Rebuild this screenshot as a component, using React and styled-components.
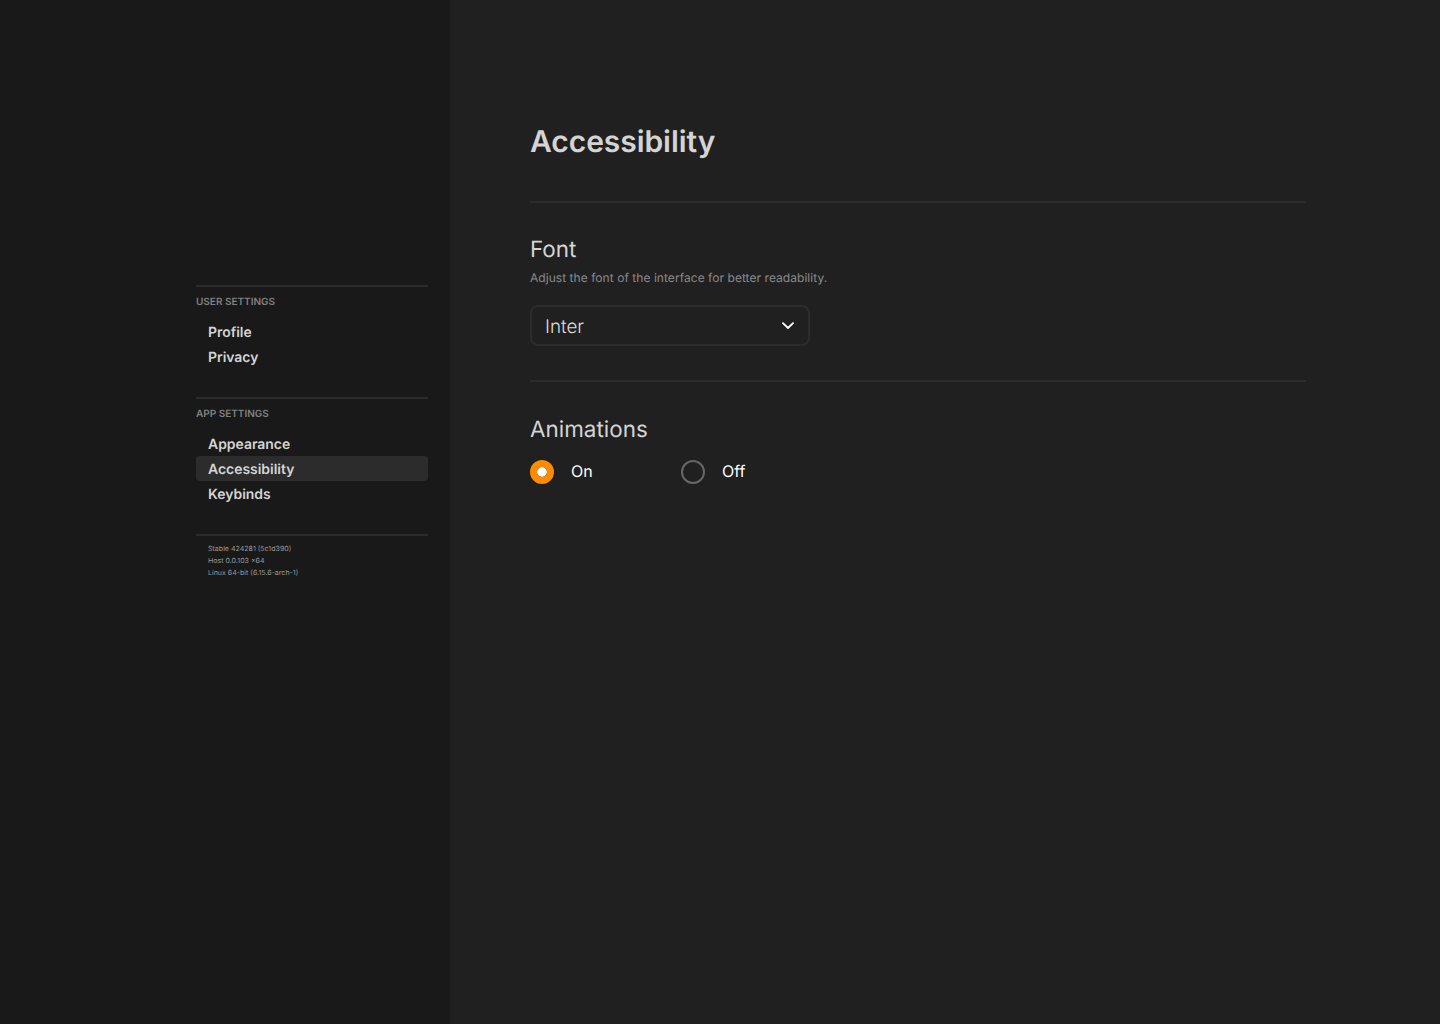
import React, { useState } from "react";
import styled, { createGlobalStyle } from "styled-components";

const GlobalStyle = createGlobalStyle`
  * { box-sizing: border-box; }
  body {
    margin: 0;
    background: #202020;
    font-family: Inter, sans-serif;
    color: #d4d4d4;
    text-rendering: geometricPrecision;
    -webkit-font-smoothing: antialiased;
  }
`;

const Page = styled.div`
  display: flex;
  height: 1024px;
  overflow: hidden;
`;

const Sidebar = styled.aside`
  flex: 0 0 450px;
  padding: 285px 22px 0 196px;
  background: #191919;
`;

const Group = styled.section`
  height: ${(p) => p.$height}px;
  border-top: 2px solid #2c2c2c;
`;

const GroupTitle = styled.h2`
  margin: 0;
  padding-top: 9px;
  height: 32px;
  font-size: 10px;
  line-height: 12px;
  font-weight: 600;
  color: #808080;
  white-space: nowrap;
`;

const NavItem = styled.a`
  display: block;
  height: 25px;
  padding-left: 12px;
  border-radius: 4px;
  background: ${(p) => (p.$active ? "#2c2c2c" : "transparent")};
  font-size: 13.95px;
  line-height: 27px;
  font-weight: 600;
  color: #d4d4d4;
`;

const BuildInfo = styled.div`
  padding: 7px 0 0 12px;
  font-size: 7.05px;
  line-height: 12px;
  color: #999;
`;

const Main = styled.main`
  flex: 1;
  padding: 122px 134px 0 80px;
  background: #202020;
`;

const Title = styled.h1`
  margin: 0;
  height: 79px;
  font-size: 30px;
  line-height: 40px;
  font-weight: 600;
  letter-spacing: -0.06px;
`;

const Setting = styled.section`
  height: 179px;
  border-top: 2px solid #2c2c2c;
  padding-top: ${(p) => p.$top}px;
`;

const SettingTitle = styled.h2`
  margin: 0;
  height: 28px;
  font-size: 22.45px;
  line-height: 30px;
  font-weight: 400;
`;

const Description = styled.p`
  margin: 7px 0 19px;
  font-size: 12px;
  line-height: 16px;
  letter-spacing: 0.05px;
  color: #8a8a8a;
`;

const Select = styled.button`
  display: flex;
  align-items: center;
  justify-content: space-between;
  width: 280px;
  height: 41px;
  padding: 0 14px 0 13px;
  border: 2px solid #2c2c2c;
  border-radius: 8px;
  background: transparent;
  font: 300 18.8px/23px Inter, sans-serif;
  text-rendering: inherit;
  color: #dcdcdc;
`;

const SelectValue = styled.span`
  padding-top: 2px;
`;

const Radios = styled.div`
  display: flex;
  margin-top: 17px;
`;

const Option = styled.label`
  display: flex;
  align-items: center;
  gap: 17px;
  width: 151px;
  height: 24px;
  font-size: 16px;
  line-height: 20px;
  color: #fff;
`;

const Radio = styled.input`
  appearance: none;
  width: 24px;
  height: 24px;
  margin: 0;
  border-radius: 50%;
  border: ${(p) => (p.checked ? "7px solid #ff8c00" : "2px solid #666")};
  background: ${(p) => (p.checked ? "#fff" : "transparent")};
  background-clip: padding-box;
`;

const OptionText = styled.span`
  padding-bottom: 2px;
`;

const navGroups = [
  { title: "USER SETTINGS", height: 112, items: ["Profile", "Privacy"] },
  { title: "APP SETTINGS", height: 137, items: ["Appearance", "Accessibility", "Keybinds"] },
];

const build = ["Stable 424281 (5c1d390)", "Host 0.0.103 x64", "Linux 64-bit (6.15.6-arch-1)"];

export default function App() {
  const [animations, setAnimations] = useState("On");
  return (
    <Page>
      <GlobalStyle />
      <Sidebar>
        {navGroups.map((g) => (
          <Group key={g.title} $height={g.height}>
            <GroupTitle>{g.title}</GroupTitle>
            {g.items.map((item) => (
              <NavItem key={item} $active={item === "Accessibility"}>{item}</NavItem>
            ))}
          </Group>
        ))}
        <Group $height={60}>
          <BuildInfo>
            {build.map((line) => <div key={line}>{line}</div>)}
          </BuildInfo>
        </Group>
      </Sidebar>
      <Main>
        <Title>Accessibility</Title>
        <Setting $top={32}>
          <SettingTitle>Font</SettingTitle>
          <Description>Adjust the font of the interface for better readability.</Description>
          <Select>
            <SelectValue>Inter</SelectValue>
            <svg width="12" height="8" viewBox="0 0 12 8" fill="none" stroke="#fff" strokeWidth="1.8" strokeLinecap="round" strokeLinejoin="round">
              <path d="M1 1.2 6 6 11 1.2" />
            </svg>
          </Select>
        </Setting>
        <Setting $top={33}>
          <SettingTitle>Animations</SettingTitle>
          <Radios>
            {["On", "Off"].map((value) => (
              <Option key={value}>
                <Radio type="radio" name="animations" checked={animations === value} onChange={() => setAnimations(value)} />
                <OptionText>{value}</OptionText>
              </Option>
            ))}
          </Radios>
        </Setting>
      </Main>
    </Page>
  );
}
